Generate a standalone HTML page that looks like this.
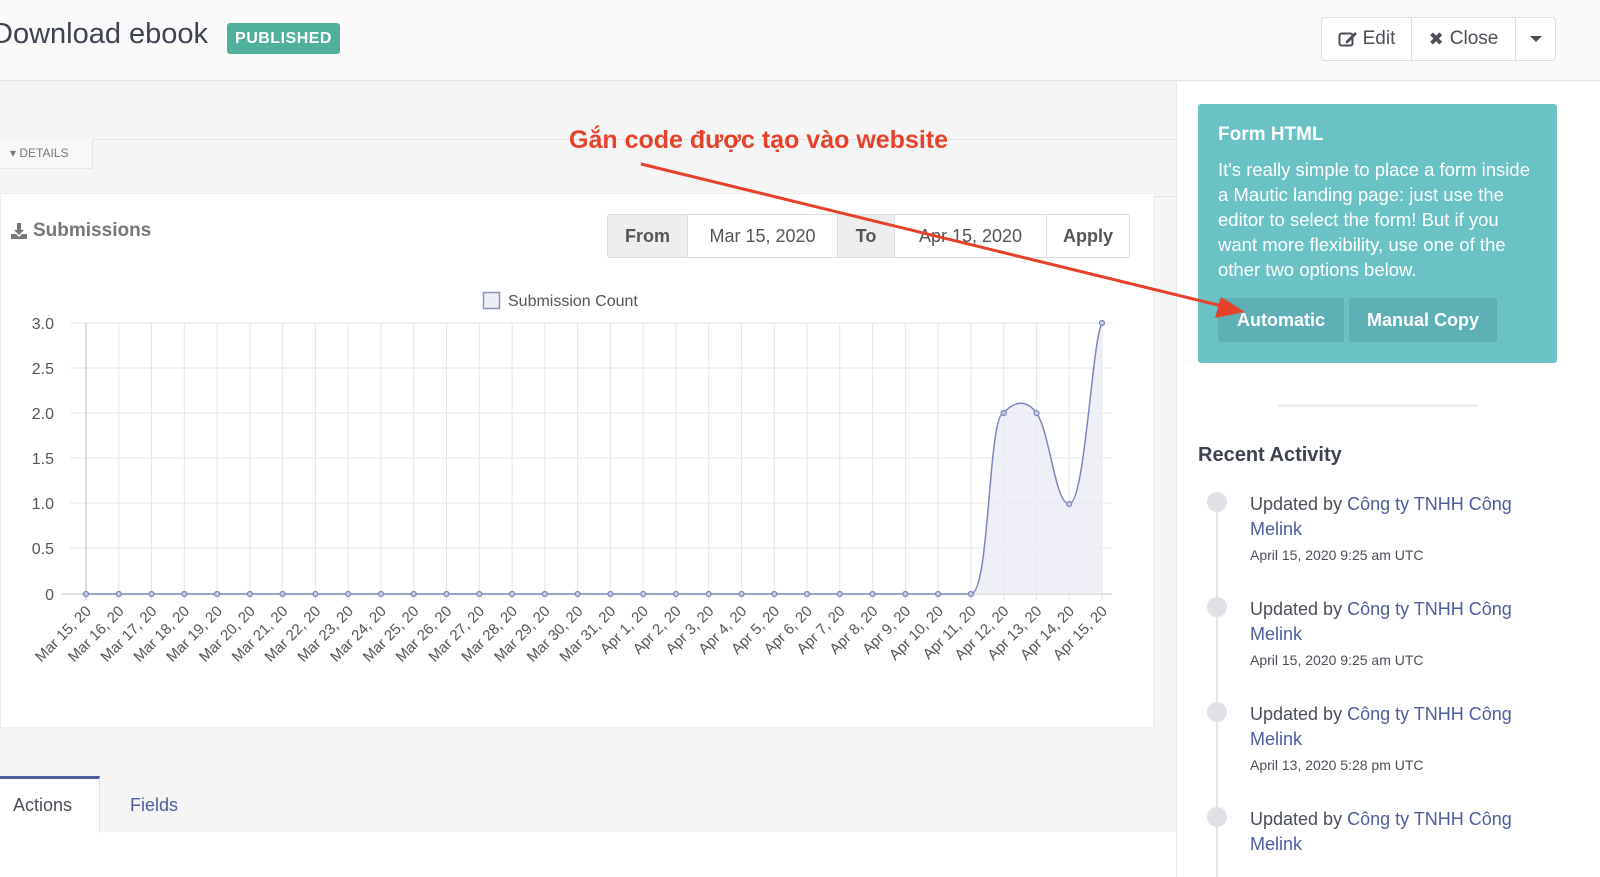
<!DOCTYPE html>
<html><head><meta charset="utf-8">
<style>
*{box-sizing:border-box;margin:0;padding:0}
body{width:1600px;height:877px;overflow:hidden;background:#f5f5f5;font-family:"Liberation Sans","DejaVu Sans",sans-serif;position:relative;color:#555}
.abs{position:absolute}
</style></head><body>
<!-- header -->
<div class="abs" style="left:0;top:0;width:1600px;height:81px;background:#fafafa;border-bottom:1px solid #e3e3e3"></div>
<div class="abs" style="left:-8px;top:18px;font-size:29px;color:#3d4450">Download ebook</div>
<div class="abs" style="left:227px;top:23px;width:113px;height:31px;background:#4fb09c;border-radius:3px;color:#fff;font-weight:bold;font-size:16px;line-height:31px;text-align:center;letter-spacing:0.5px">PUBLISHED</div>
<div class="abs" style="left:1321px;top:17px;width:235px;height:44px;border:1px solid #ddd;border-radius:4px;background:#fff;display:flex;font-size:19px;color:#4a4f57">
 <div style="width:90px;border-right:1px solid #ddd;display:flex;align-items:center;justify-content:center;gap:5px"><svg width="20" height="18" viewBox="0 0 20 18"><rect x="1.5" y="3.5" width="13" height="12" rx="2" fill="none" stroke="#4a4f57" stroke-width="2"/><path d="M8 11 L17 2 L19 4 L10 13 L7.5 13.5 Z" fill="#4a4f57"/></svg>Edit</div>
 <div style="width:104px;border-right:1px solid #ddd;display:flex;align-items:center;justify-content:center;gap:6px"><span style="font-weight:bold;font-size:18px">✖</span>Close</div>
 <div style="flex:1;display:flex;align-items:center;justify-content:center"><div style="border-left:6px solid transparent;border-right:6px solid transparent;border-top:6px solid #4a4f57"></div></div>
</div>
<!-- right panel -->
<div class="abs" style="left:1176px;top:82px;width:424px;height:795px;background:#fff;border-left:1px solid #e8e8e8"></div>
<div class="abs" style="left:1198px;top:104px;width:359px;height:259px;background:#6bc2c6;border-radius:3px;color:#fff;padding:20px 20px">
 <div style="font-size:19px;font-weight:bold;margin-top:0px">Form HTML</div>
 <div style="font-size:18.5px;line-height:25px;margin-top:11px;width:318px">It's really simple to place a form inside a Mautic landing page: just use the editor to select the form! But if you want more flexibility, use one of the other two options below.</div>
</div>
<div class="abs" style="left:1218px;top:298px;width:126px;height:44px;background:#5cb0b6;border-radius:3px;color:#fff;font-size:18px;font-weight:bold;line-height:44px;text-align:center">Automatic</div>
<div class="abs" style="left:1349px;top:298px;width:148px;height:44px;background:#5cb0b6;border-radius:3px;color:#fff;font-size:18px;font-weight:bold;line-height:44px;text-align:center">Manual Copy</div>
<div class="abs" style="left:1278px;top:404px;width:200px;height:3px;background:#eee"></div>
<div class="abs" style="left:1198px;top:444px;font-size:20px;font-weight:bold;color:#3d4450">Recent Activity</div>
<div class="abs" style="left:1216px;top:500px;width:2px;height:377px;background:#e5e5e5"></div>
<div class="abs" style="left:1207px;top:492px;width:20px;height:20px;border-radius:50%;background:#dfe1e6"></div>
<div class="abs" style="left:1207px;top:597px;width:20px;height:20px;border-radius:50%;background:#dfe1e6"></div>
<div class="abs" style="left:1207px;top:702px;width:20px;height:20px;border-radius:50%;background:#dfe1e6"></div>
<div class="abs" style="left:1207px;top:807px;width:20px;height:20px;border-radius:50%;background:#dfe1e6"></div>
<div class="abs" style="left:1250px;top:492px;width:300px;font-size:18px;line-height:25px;color:#4a4f57">Updated by <span style="color:#4e5d9d">Công ty TNHH Công Melink</span><div style="font-size:14px;line-height:20px;margin-top:3px">April 15, 2020 9:25 am UTC</div></div>
<div class="abs" style="left:1250px;top:597px;width:300px;font-size:18px;line-height:25px;color:#4a4f57">Updated by <span style="color:#4e5d9d">Công ty TNHH Công Melink</span><div style="font-size:14px;line-height:20px;margin-top:3px">April 15, 2020 9:25 am UTC</div></div>
<div class="abs" style="left:1250px;top:702px;width:300px;font-size:18px;line-height:25px;color:#4a4f57">Updated by <span style="color:#4e5d9d">Công ty TNHH Công Melink</span><div style="font-size:14px;line-height:20px;margin-top:3px">April 13, 2020 5:28 pm UTC</div></div>
<div class="abs" style="left:1250px;top:807px;width:300px;font-size:18px;line-height:25px;color:#4a4f57">Updated by <span style="color:#4e5d9d">Công ty TNHH Công Melink</span></div>
<!-- details -->
<div class="abs" style="left:0;top:139px;width:1176px;height:1px;background:#e6e6e6"></div>
<div class="abs" style="left:0;top:139px;width:93px;height:30px;background:#f8f8f8;border-right:1px solid #e6e6e6;border-bottom:1px solid #e6e6e6;font-size:12px;color:#777;line-height:28px;padding-left:10px">▾ DETAILS</div>
<div class="abs" style="left:0;top:196px;width:1176px;height:1px;background:#e6e6e6"></div>
<!-- card -->
<div class="abs" style="left:0;top:193px;width:1154px;height:535px;background:#fff;border:1px solid #eee"></div>
<div class="abs" style="left:10px;top:220px;font-size:19px;font-weight:bold;color:#777;display:flex;align-items:center;gap:5px"><svg width="18" height="18" viewBox="0 0 18 18"><path d="M7 1h4v7h3l-5 5-5-5h3z" fill="#777"/><path d="M1 12h5l3 3 3-3h5v5H1z" fill="#777"/></svg>Submissions</div>
<div class="abs" style="left:607px;top:214px;width:523px;height:44px;border:1px solid #ddd;border-radius:3px;display:flex;font-size:18px;background:#fff">
 <div style="width:80px;background:#eee;border-right:1px solid #ddd;display:flex;align-items:center;justify-content:center;font-weight:bold;color:#555">From</div>
 <div style="width:150px;border-right:1px solid #ddd;display:flex;align-items:center;justify-content:center;color:#555">Mar 15, 2020</div>
 <div style="width:57px;background:#eee;border-right:1px solid #ddd;display:flex;align-items:center;justify-content:center;font-weight:bold;color:#555">To</div>
 <div style="width:152px;border-right:1px solid #ddd;display:flex;align-items:center;justify-content:center;color:#555">Apr 15, 2020</div>
 <div style="flex:1;display:flex;align-items:center;justify-content:center;font-weight:bold;color:#555">Apply</div>
</div>
<svg class="abs" style="left:0;top:0" width="1176" height="740">
<rect x="483.5" y="292.5" width="16" height="16" fill="#eceef6" stroke="#8a92c0" stroke-width="1.5"/>
<text x="508" y="306" font-size="16" fill="#555" font-family="Liberation Sans">Submission Count</text>
<g stroke="#e6e6e6" stroke-width="1">
<line x1="70" y1="323" x2="1112" y2="323"/><line x1="70" y1="368" x2="1112" y2="368"/><line x1="70" y1="413" x2="1112" y2="413"/><line x1="70" y1="458" x2="1112" y2="458"/><line x1="70" y1="503" x2="1112" y2="503"/><line x1="70" y1="548" x2="1112" y2="548"/>
<line x1="118.8" y1="323" x2="118.8" y2="600"/><line x1="151.5" y1="323" x2="151.5" y2="600"/><line x1="184.3" y1="323" x2="184.3" y2="600"/><line x1="217.1" y1="323" x2="217.1" y2="600"/><line x1="249.9" y1="323" x2="249.9" y2="600"/><line x1="282.6" y1="323" x2="282.6" y2="600"/><line x1="315.4" y1="323" x2="315.4" y2="600"/><line x1="348.2" y1="323" x2="348.2" y2="600"/><line x1="381" y1="323" x2="381" y2="600"/><line x1="413.7" y1="323" x2="413.7" y2="600"/><line x1="446.5" y1="323" x2="446.5" y2="600"/><line x1="479.3" y1="323" x2="479.3" y2="600"/><line x1="512.1" y1="323" x2="512.1" y2="600"/><line x1="544.8" y1="323" x2="544.8" y2="600"/><line x1="577.6" y1="323" x2="577.6" y2="600"/><line x1="610.4" y1="323" x2="610.4" y2="600"/><line x1="643.2" y1="323" x2="643.2" y2="600"/><line x1="675.9" y1="323" x2="675.9" y2="600"/><line x1="708.7" y1="323" x2="708.7" y2="600"/><line x1="741.5" y1="323" x2="741.5" y2="600"/><line x1="774.3" y1="323" x2="774.3" y2="600"/><line x1="807" y1="323" x2="807" y2="600"/><line x1="839.8" y1="323" x2="839.8" y2="600"/><line x1="872.6" y1="323" x2="872.6" y2="600"/><line x1="905.4" y1="323" x2="905.4" y2="600"/><line x1="938.1" y1="323" x2="938.1" y2="600"/><line x1="970.9" y1="323" x2="970.9" y2="600"/><line x1="1003.7" y1="323" x2="1003.7" y2="600"/><line x1="1036.5" y1="323" x2="1036.5" y2="600"/><line x1="1069.2" y1="323" x2="1069.2" y2="600"/><line x1="1102" y1="323" x2="1102" y2="600"/>
</g>
<line x1="86" y1="323" x2="86" y2="600" stroke="#bbb"/>
<line x1="62" y1="594" x2="1112" y2="594" stroke="#bbb"/>
<g font-size="16" fill="#555" text-anchor="end" font-family="Liberation Sans">
<text x="54" y="329">3.0</text><text x="54" y="374">2.5</text><text x="54" y="419">2.0</text><text x="54" y="464">1.5</text><text x="54" y="509">1.0</text><text x="54" y="554">0.5</text><text x="54" y="600">0</text>
</g>
<path d="M86 594 L970.9 594 C990 594 988 413 1003.7 413 C1015 400 1027 400 1036.5 413 C1050 432 1055 504 1069.2 504 C1085 504 1092 340 1102 323 L1102 594 Z" fill="#eaebf5" fill-opacity="0.8"/>
<path d="M86 594 L970.9 594 C990 594 988 413 1003.7 413 C1015 400 1027 400 1036.5 413 C1050 432 1055 504 1069.2 504 C1085 504 1092 340 1102 323" fill="none" stroke="#7b86bd" stroke-width="1.5"/>
<g fill="#c9cde6" stroke="#7b86bd" stroke-width="1.2">
<circle cx="86" cy="594" r="2.5"/><circle cx="118.8" cy="594" r="2.5"/><circle cx="151.5" cy="594" r="2.5"/><circle cx="184.3" cy="594" r="2.5"/><circle cx="217.1" cy="594" r="2.5"/><circle cx="249.9" cy="594" r="2.5"/><circle cx="282.6" cy="594" r="2.5"/><circle cx="315.4" cy="594" r="2.5"/><circle cx="348.2" cy="594" r="2.5"/><circle cx="381" cy="594" r="2.5"/><circle cx="413.7" cy="594" r="2.5"/><circle cx="446.5" cy="594" r="2.5"/><circle cx="479.3" cy="594" r="2.5"/><circle cx="512.1" cy="594" r="2.5"/><circle cx="544.8" cy="594" r="2.5"/><circle cx="577.6" cy="594" r="2.5"/><circle cx="610.4" cy="594" r="2.5"/><circle cx="643.2" cy="594" r="2.5"/><circle cx="675.9" cy="594" r="2.5"/><circle cx="708.7" cy="594" r="2.5"/><circle cx="741.5" cy="594" r="2.5"/><circle cx="774.3" cy="594" r="2.5"/><circle cx="807" cy="594" r="2.5"/><circle cx="839.8" cy="594" r="2.5"/><circle cx="872.6" cy="594" r="2.5"/><circle cx="905.4" cy="594" r="2.5"/><circle cx="938.1" cy="594" r="2.5"/><circle cx="970.9" cy="594" r="2.5"/><circle cx="1003.7" cy="413" r="2.5"/><circle cx="1036.5" cy="413" r="2.5"/><circle cx="1069.2" cy="504" r="2.5"/><circle cx="1102" cy="323" r="2.5"/>
</g>
<g font-size="15" fill="#555" text-anchor="end" font-family="Liberation Sans">
<text transform="translate(92,612) rotate(-45)">Mar 15, 20</text><text transform="translate(124.8,612) rotate(-45)">Mar 16, 20</text><text transform="translate(157.5,612) rotate(-45)">Mar 17, 20</text><text transform="translate(190.3,612) rotate(-45)">Mar 18, 20</text><text transform="translate(223.1,612) rotate(-45)">Mar 19, 20</text><text transform="translate(255.9,612) rotate(-45)">Mar 20, 20</text><text transform="translate(288.6,612) rotate(-45)">Mar 21, 20</text><text transform="translate(321.4,612) rotate(-45)">Mar 22, 20</text><text transform="translate(354.2,612) rotate(-45)">Mar 23, 20</text><text transform="translate(387,612) rotate(-45)">Mar 24, 20</text><text transform="translate(419.7,612) rotate(-45)">Mar 25, 20</text><text transform="translate(452.5,612) rotate(-45)">Mar 26, 20</text><text transform="translate(485.3,612) rotate(-45)">Mar 27, 20</text><text transform="translate(518.1,612) rotate(-45)">Mar 28, 20</text><text transform="translate(550.8,612) rotate(-45)">Mar 29, 20</text><text transform="translate(583.6,612) rotate(-45)">Mar 30, 20</text><text transform="translate(616.4,612) rotate(-45)">Mar 31, 20</text><text transform="translate(649.2,612) rotate(-45)">Apr 1, 20</text><text transform="translate(681.9,612) rotate(-45)">Apr 2, 20</text><text transform="translate(714.7,612) rotate(-45)">Apr 3, 20</text><text transform="translate(747.5,612) rotate(-45)">Apr 4, 20</text><text transform="translate(780.3,612) rotate(-45)">Apr 5, 20</text><text transform="translate(813,612) rotate(-45)">Apr 6, 20</text><text transform="translate(845.8,612) rotate(-45)">Apr 7, 20</text><text transform="translate(878.6,612) rotate(-45)">Apr 8, 20</text><text transform="translate(911.4,612) rotate(-45)">Apr 9, 20</text><text transform="translate(944.1,612) rotate(-45)">Apr 10, 20</text><text transform="translate(976.9,612) rotate(-45)">Apr 11, 20</text><text transform="translate(1009.7,612) rotate(-45)">Apr 12, 20</text><text transform="translate(1042.5,612) rotate(-45)">Apr 13, 20</text><text transform="translate(1075.2,612) rotate(-45)">Apr 14, 20</text><text transform="translate(1108,612) rotate(-45)">Apr 15, 20</text>
</g>
</svg>
<!-- tabs -->
<div class="abs" style="left:0;top:832px;width:1176px;height:45px;background:#fff"></div>
<div class="abs" style="left:0;top:776px;width:100px;height:57px;background:#fff;border-top:3px solid #4e5d9d;border-right:1px solid #e3e3e3;font-size:18px;color:#4a4f57;line-height:52px;padding-left:13px">Actions</div>
<div class="abs" style="left:130px;top:779px;font-size:18px;color:#4e5d9d;line-height:52px">Fields</div>
<!-- annotation -->
<div class="abs" style="left:569px;top:126px;font-size:25px;font-weight:bold;color:#e8412a">Gắn code được tạo vào website</div>
<svg class="abs" style="left:0;top:0" width="1600" height="877">
<line x1="641" y1="164" x2="1222" y2="306" stroke="#e8412a" stroke-width="3"/>
<path d="M1245 312 L1215 318 L1221 297 Z" fill="#e8412a"/>
</svg>
</body></html>
